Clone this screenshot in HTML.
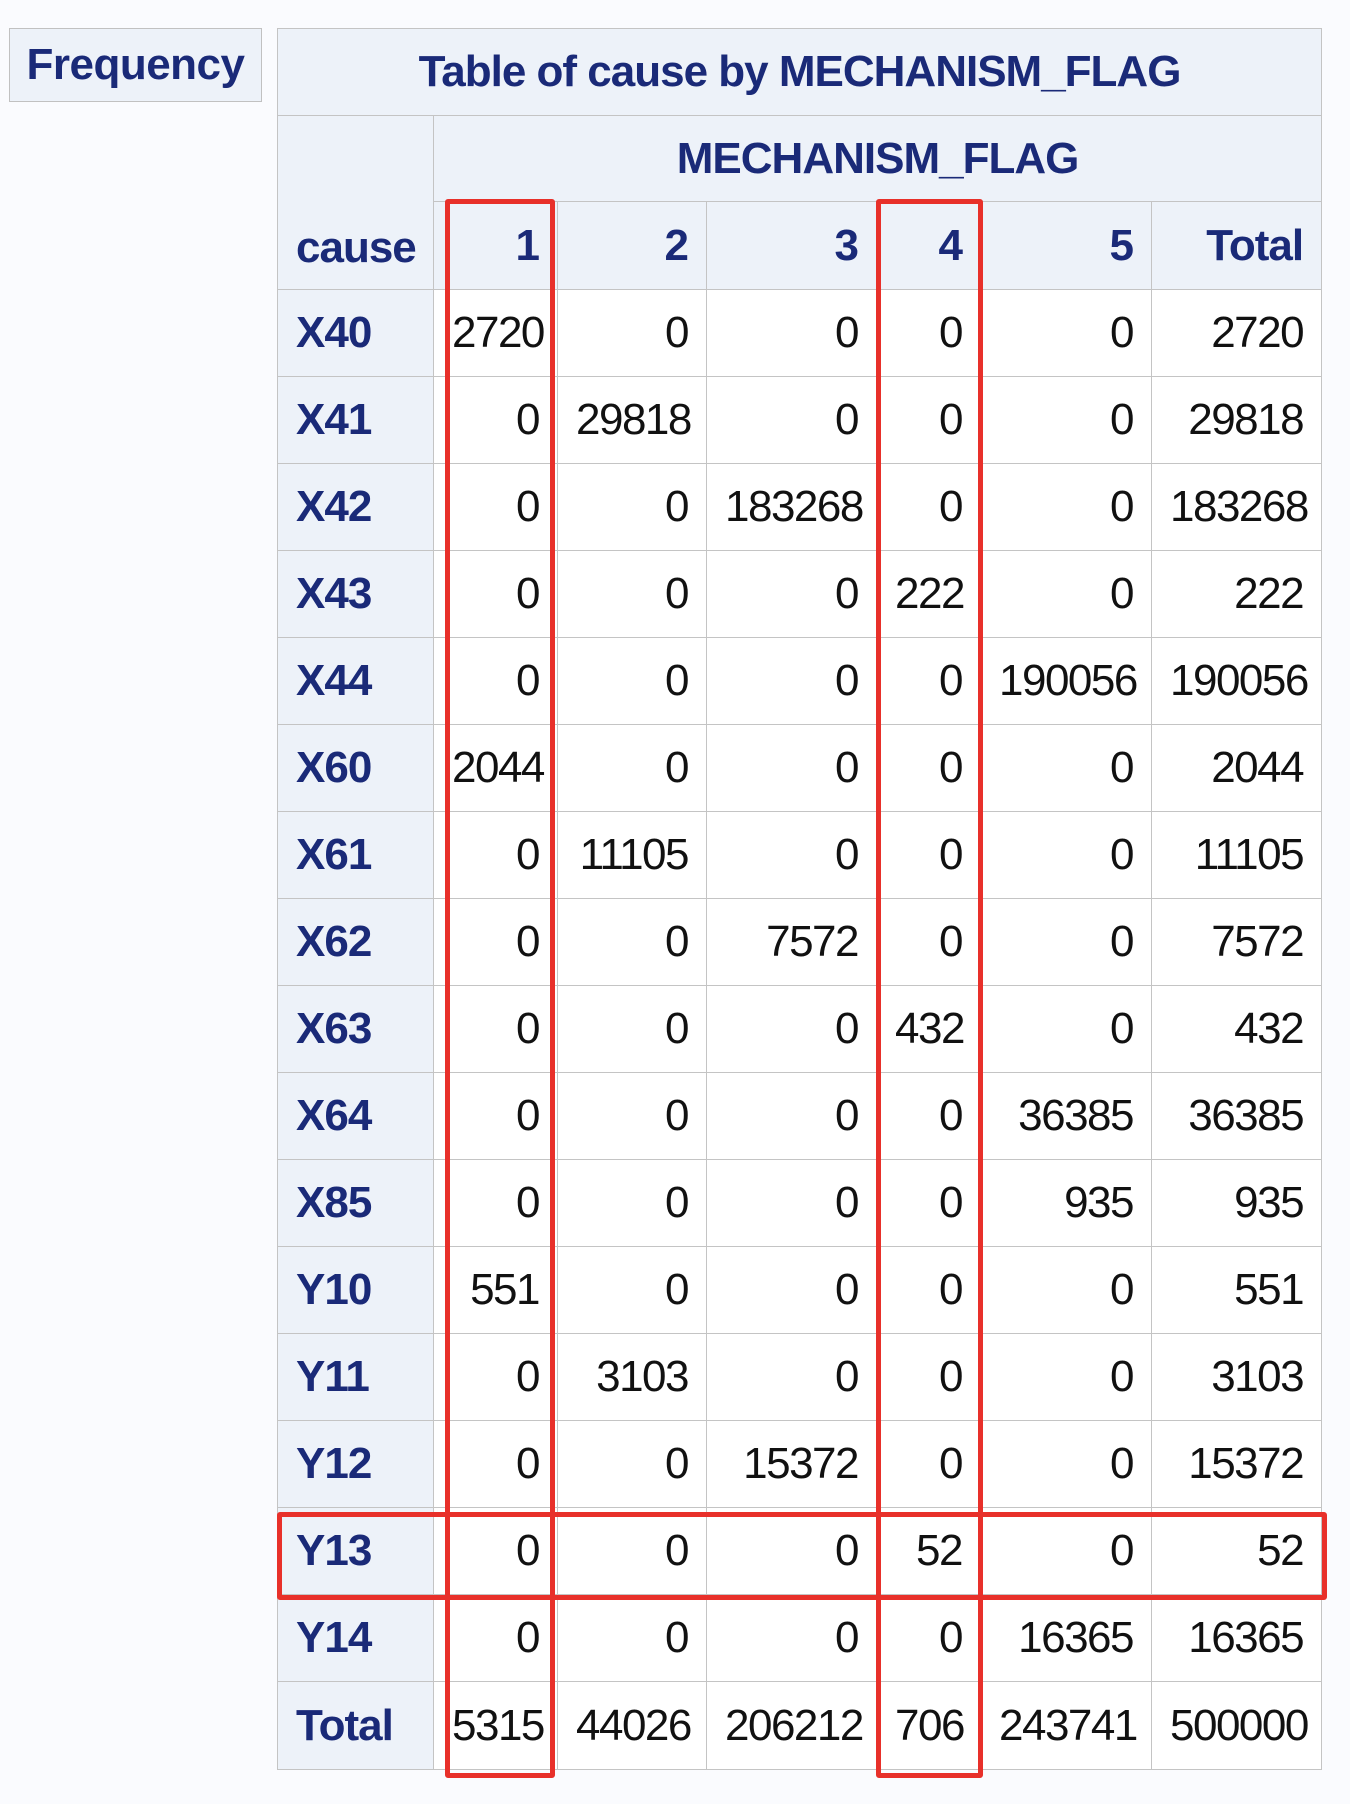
<!DOCTYPE html>
<html><head><meta charset="utf-8">
<style>
html,body{margin:0;padding:0;}
body{width:1350px;height:1804px;background:#fafbfe;position:relative;overflow:hidden;font-family:"Liberation Sans",Arial,sans-serif;}
.freq{position:absolute;left:9px;top:28px;width:251px;height:72px;background:#edf2f9;border:1px solid #c1c1c1;color:#1a2a78;font-weight:bold;font-size:44px;line-height:72px;text-align:center;letter-spacing:-0.5px;}
table{position:absolute;left:277px;top:28px;border-collapse:collapse;table-layout:fixed;width:1044px;}
td,th{border:1px solid #c4c4c4;font-size:44px;padding:0 18px 0 18px;white-space:nowrap;overflow:hidden;}
th{background:#edf2f9;color:#1a2a78;font-weight:bold;letter-spacing:-1px;}
td{background:#fff;color:#111;text-align:right;padding-right:18px;letter-spacing:-1.5px;}
th.r{text-align:right;}
th.l{text-align:left;}
.box{position:absolute;border:5px solid #e8302a;box-sizing:border-box;border-radius:3px;}
</style></head><body>
<div class="freq">Frequency</div>
<table>
<colgroup><col style="width:156px"><col style="width:124px"><col style="width:149px"><col style="width:170px"><col style="width:104px"><col style="width:171px"><col style="width:170px"></colgroup>
<tr style="height:87px"><th colspan="7">Table of cause by MECHANISM_FLAG</th></tr>
<tr style="height:86px"><th rowspan="2" class="l" style="vertical-align:bottom;padding-bottom:16px">cause</th><th colspan="6">MECHANISM_FLAG</th></tr>
<tr style="height:88px"><th class="r">1</th><th class="r">2</th><th class="r">3</th><th class="r">4</th><th class="r">5</th><th class="r">Total</th></tr>
<tr style="height:87px"><th class="l">X40</th><td>2720</td><td>0</td><td>0</td><td>0</td><td>0</td><td>2720</td></tr>
<tr style="height:87px"><th class="l">X41</th><td>0</td><td>29818</td><td>0</td><td>0</td><td>0</td><td>29818</td></tr>
<tr style="height:87px"><th class="l">X42</th><td>0</td><td>0</td><td>183268</td><td>0</td><td>0</td><td>183268</td></tr>
<tr style="height:87px"><th class="l">X43</th><td>0</td><td>0</td><td>0</td><td>222</td><td>0</td><td>222</td></tr>
<tr style="height:87px"><th class="l">X44</th><td>0</td><td>0</td><td>0</td><td>0</td><td>190056</td><td>190056</td></tr>
<tr style="height:87px"><th class="l">X60</th><td>2044</td><td>0</td><td>0</td><td>0</td><td>0</td><td>2044</td></tr>
<tr style="height:87px"><th class="l">X61</th><td>0</td><td>11105</td><td>0</td><td>0</td><td>0</td><td>11105</td></tr>
<tr style="height:87px"><th class="l">X62</th><td>0</td><td>0</td><td>7572</td><td>0</td><td>0</td><td>7572</td></tr>
<tr style="height:87px"><th class="l">X63</th><td>0</td><td>0</td><td>0</td><td>432</td><td>0</td><td>432</td></tr>
<tr style="height:87px"><th class="l">X64</th><td>0</td><td>0</td><td>0</td><td>0</td><td>36385</td><td>36385</td></tr>
<tr style="height:87px"><th class="l">X85</th><td>0</td><td>0</td><td>0</td><td>0</td><td>935</td><td>935</td></tr>
<tr style="height:87px"><th class="l">Y10</th><td>551</td><td>0</td><td>0</td><td>0</td><td>0</td><td>551</td></tr>
<tr style="height:87px"><th class="l">Y11</th><td>0</td><td>3103</td><td>0</td><td>0</td><td>0</td><td>3103</td></tr>
<tr style="height:87px"><th class="l">Y12</th><td>0</td><td>0</td><td>15372</td><td>0</td><td>0</td><td>15372</td></tr>
<tr style="height:87px"><th class="l">Y13</th><td>0</td><td>0</td><td>0</td><td>52</td><td>0</td><td>52</td></tr>
<tr style="height:87px"><th class="l">Y14</th><td>0</td><td>0</td><td>0</td><td>0</td><td>16365</td><td>16365</td></tr>
<tr style="height:88px"><th class="l">Total</th><td>5315</td><td>44026</td><td>206212</td><td>706</td><td>243741</td><td>500000</td></tr>
</table>
<div class="box" style="left:445px;top:199px;width:110px;height:1579px"></div>
<div class="box" style="left:876px;top:199px;width:107px;height:1579px"></div>
<div class="box" style="left:277px;top:1512px;width:1050px;height:88px"></div>
</body></html>
